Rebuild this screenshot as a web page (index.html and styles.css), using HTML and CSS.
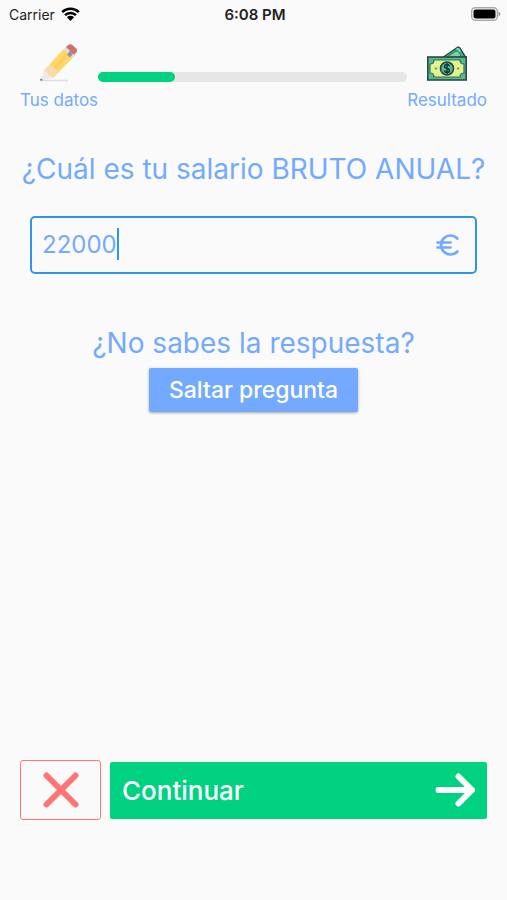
FILE: index.html
```html
<!DOCTYPE html>
<html lang="es">
<head>
<meta charset="utf-8">
<meta name="viewport" content="width=device-width, initial-scale=1">
<title>Salario bruto anual</title>
<link rel="stylesheet" href="styles.css">
</head>
<body>
<div class="status">
  <div class="carrier">
    <span>Carrier</span>
    <svg width="19" height="14" viewBox="0 0 19 14" aria-hidden="true">
      <path d="M1.2 5.2a12 12 0 0 1 16.6 0M4 8.2a8 8 0 0 1 11 0" fill="none" stroke="#000" stroke-width="2.5"/>
      <path d="M5.900 10.200a5.200 5.200 0 0 1 7.200 0L9.500 14z"/>
    </svg>
  </div>
  <time class="clock">6:08 PM</time>
  <svg class="battery" width="30" height="14" viewBox="0 0 30 14" aria-hidden="true">
    <rect x=".7" y=".7" width="25.600" height="12.600" rx="3.500" fill="#fff" stroke="#aaa" stroke-width="1.400"/>
    <rect x="2.500" y="2.500" width="22" height="9" rx="2"/>
    <path d="M27.500 4.500q4 2.500 0 5z" fill="#999"/>
  </svg>
</div>

<header class="steps">
  <div class="step">
    <svg width="40" height="40" viewBox="0 0 40 40" aria-hidden="true">
      <path d="M2 36.500h27" stroke="#dedee0" stroke-width="1.500"/>
      <path d="M2 37L5 26.500 13.500 34z" fill="#ececec"/>
      <path d="M1 35.500l1.500-1 1.500 2H1z" fill="#777"/>
      <path d="M5 26.500L24.500 5l9.500 8.500L14 34l-2.500-2-2-.5-1-2.500z" fill="#ffd768"/>
      <path d="M9 28.500L28 8l3 2.800L11.500 31.500z" fill="#fbcf62"/>
      <path d="M5 26.500L11 20l9 8-6 6-2.500-2-2-.5-1-2.500z" fill="#f9dcae"/>
      <path d="M24.500 5L28 2l9 8-3 3.500z" fill="#dce0e6"/>
      <path d="M31 6.500l3.500 3-3.500 4-3-3z" fill="#9299a4"/>
      <path d="M27 3l2.500-2.200q2-1.300 4 .4L37 4.300q2 2 .5 4L35 10.500z" fill="#cf7168"/>
    </svg>
    <span>Tus datos</span>
  </div>
  <div class="track" role="progressbar" aria-label="Progreso" aria-valuenow="25" aria-valuemin="0" aria-valuemax="100"><div class="fill"></div></div>
  <div class="step">
    <svg width="40" height="40" viewBox="0 0 40 40" aria-hidden="true">
      <path d="M15 14L31 3l2 1 6 10z" fill="#3fb98c" stroke="#31484a" stroke-width="1.500"/>
      <path d="M20 13l9-6q4 0 5 6z" fill="#72d8a8" stroke="#31695d"/>
      <path d="M29 4l3 0 2 3-2 1z" fill="#65dcae"/>
      <rect x=".8" y="13" width="38.400" height="23" fill="#4fbd89" stroke="#31484a" stroke-width="1.600"/>
      <path d="M7 16h26q0 4 4 4v9q-4 0-4 4H7q0-4-4-4v-9q4 0 4-4z" fill="#e4f390" stroke="#327258" stroke-width="1.200"/>
      <circle cx="20" cy="24.500" r="6.500" fill="#55b98b" stroke="#27444a" stroke-width="1.600"/>
      <path d="M22.500 22q-.5-1.500-2.500-1.500t-2.500 1.700q0 1.500 2.500 2.100t2.500 2.200q0 1.800-2.500 1.800t-2.500-1.800M20 19v11" fill="none" stroke="#173b3d" stroke-width="1.500"/>
      <path d="M7.500 24.500l1.500-1.500 1.500 1.500L9 26zM29.500 24.500l1.500-1.500 1.500 1.500L31 26z" fill="#71a15f"/>
    </svg>
    <span>Resultado</span>
  </div>
</header>

<form class="form">
  <label class="question" for="salary">¿Cuál es tu salario BRUTO ANUAL?</label>
  <div class="field">
    <input id="salary" type="text" inputmode="numeric" value="22000">
    <span class="caret"></span>
    <svg class="euro" width="24" height="24" viewBox="0 0 24 24" role="img" aria-label="Euros">
      <path d="M21.400 6.500A9.500 9.500 0 1 0 21.400 19.500M1.500 10.500h13M1.500 15.500h13" fill="none" stroke="currentColor" stroke-width="2.700" stroke-linecap="round"/>
    </svg>
  </div>
  <p class="hint">¿No sabes la respuesta?</p>
  <button class="skip" type="button">Saltar pregunta</button>
  <div class="actions">
    <button class="cancel" type="button" aria-label="Cancelar">
      <svg width="36" height="36" viewBox="0 0 36 36" aria-hidden="true"><path d="M3.500 3.500l29 29M32.500 3.500L3.500 32.500" stroke="currentColor" stroke-width="6" stroke-linecap="round"/></svg>
    </button>
    <button class="next" type="submit">
      <span>Continuar</span>
      <svg width="40" height="34" viewBox="0 0 40 34" aria-hidden="true"><path d="M3.500 17H37M23.500 3.500L37 17 23.500 30.500" fill="none" stroke="currentColor" stroke-width="6" stroke-linecap="round" stroke-linejoin="round"/></svg>
    </button>
  </div>
</form>
</body>
</html>
```
FILE: styles.css
```css
* { box-sizing: border-box; }

body {
  margin: 0;
  min-height: 100vh;
  display: flex;
  flex-direction: column;
  background: #fafafa;
  color: #73aaff;
  font-family: Inter, "Liberation Sans", sans-serif;
}

button, input { font: inherit; }
svg { display: block; flex: none; }

.status {
  display: grid;
  grid-template-columns: 1fr auto 1fr;
  align-items: center;
  height: 28px;
  padding: 0 6px 0 9px;
  color: #222;
  font-size: 14px;
}
.carrier { display: flex; align-items: center; gap: 6px; }
.clock { font-size: 15px; font-weight: 600; }
.battery { justify-self: end; }

.steps {
  display: flex;
  align-items: center;
  height: 66px;
  margin-top: 16px;
  padding: 0 20px;
}
.step {
  display: flex;
  flex-direction: column;
  align-items: center;
  gap: 6px;
  font-size: 17px;
  line-height: 20px;
}
.track {
  flex: 1;
  height: 10px;
  border-radius: 5px;
  background: #e6e6e6;
}
.fill {
  width: 25%;
  height: 100%;
  border-radius: 5px;
  background: #00d282;
}

.form {
  flex: 1;
  display: flex;
  flex-direction: column;
  align-items: center;
  padding: 41px 20px 80px;
}
.question, .hint {
  margin: 0;
  font-size: 28px;
  line-height: 36px;
  text-align: center;
}
.field {
  align-self: stretch;
  display: flex;
  align-items: center;
  height: 58px;
  margin: 29px 10px 51px;
  padding: 0 15px 2px 10px;
  border: 2px solid #2e96e4;
  border-radius: 5px;
}
.field input {
  field-sizing: content;
  padding: 0;
  border: 0;
  outline: 0;
  background: none;
  color: inherit;
  caret-color: transparent;
  font-size: 24px;
}
.caret { width: 2px; height: 32px; background: #2e96e4; }
.euro { margin-left: auto; }

.skip {
  height: 44px;
  margin-top: 7px;
  padding: 0 20px;
  border: 0;
  border-radius: 2px;
  background: #73aaff;
  box-shadow: 0 1px 3px #0005;
  color: #fff;
  font-size: 23px;
  font-weight: 500;
}

.actions {
  align-self: stretch;
  display: flex;
  align-items: center;
  gap: 9px;
  margin-top: auto;
}
.cancel {
  display: grid;
  place-items: center;
  width: 81px;
  height: 60px;
  padding: 0;
  border: 1px solid #ff7878;
  border-radius: 3px;
  background: none;
  color: #ff7575;
}
.next {
  flex: 1;
  display: flex;
  align-items: center;
  justify-content: space-between;
  height: 57px;
  padding: 0 12px;
  border: 0;
  border-radius: 2px;
  background: #00d282;
  color: #fff;
  font-size: 26px;
  font-weight: 500;
}
```
